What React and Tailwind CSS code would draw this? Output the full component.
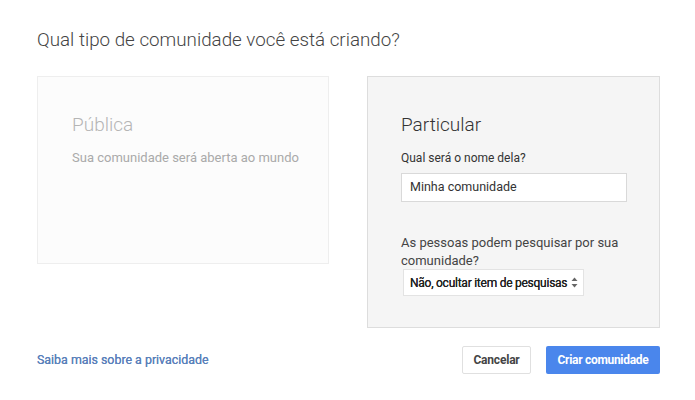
export default function App() {
  return (
    <div className="w-[695px] h-[400px] bg-white relative overflow-hidden" style={{ fontFamily: "Roboto, 'Liberation Sans', sans-serif" }}>
      <div className="pl-[37px] pr-[35px] pt-[28px]">
        <h1 className="text-[18.8px] font-light text-[#444] leading-[24px]">Qual tipo de comunidade você está criando?</h1>
        <div className="flex mt-[24px] gap-[38px] items-start">
          <div className="w-[293px] h-[188px] bg-[#fcfcfc] border border-[#eeeeee] pl-[34px] pt-[36px]">
            <div className="text-[19px] font-light text-[#b5b5b5] leading-[24px]">Pública</div>
            <div className="text-[13px] text-[#aaaaaa] mt-[13px] leading-[16px]">Sua comunidade será aberta ao mundo</div>
          </div>
          <div className="w-[293px] h-[252px] bg-[#f5f5f5] border border-[#dddddd] pl-[33px] pt-[36px] pr-[30px]">
            <div className="text-[19px] font-light text-[#333] leading-[24px]">Particular</div>
            <div className="text-[12px] text-[#333] mt-[13px] leading-[16px]">Qual será o nome dela?</div>
            <div className="mt-[7px] w-[226px] h-[29px] bg-white border border-[#d9d9d9] flex items-center pl-[8px] text-[12.5px] text-[#333]">Minha comunidade</div>
            <div className="mt-[32px] text-[13px] text-[#444] leading-[18px] w-[230px]">As pessoas podem pesquisar por sua comunidade?</div>
            <div className="mt-[-1px] ml-[2px] w-[181px] h-[27px] bg-white border border-[#e3e3e3] flex items-center pl-[6px] pr-[5px] text-[12px] text-[#222] justify-between whitespace-nowrap">
              <span className="tracking-[-0.25px] [text-shadow:0_0_0.4px_#222]">Não, ocultar item de pesquisas</span>
              <svg width="7" height="11" viewBox="0 0 7 11"><path d="M3.5 0.5 L6.5 4 H0.5 Z" fill="#666"/><path d="M3.5 10.5 L6.5 7 H0.5 Z" fill="#666"/></svg>
            </div>
          </div>
        </div>
        <div className="flex items-center mt-[18px]">
          <a className="text-[12.4px] text-[#5a80ba] [text-shadow:0_0_0.3px_#5a80ba]">Saiba mais sobre a privacidade</a>
          <div className="ml-auto flex gap-[15px]">
            <button className="h-[28px] w-[69px] bg-white border border-[#e0e0e0] rounded-[2px] text-[12px] font-bold text-[#444] tracking-[-0.2px]">Cancelar</button>
            <button className="h-[28px] w-[114px] bg-[#4a86ec] rounded-[2px] text-[12px] font-bold text-white tracking-[-0.3px]">Criar comunidade</button>
          </div>
        </div>
      </div>
    </div>
  );
}
